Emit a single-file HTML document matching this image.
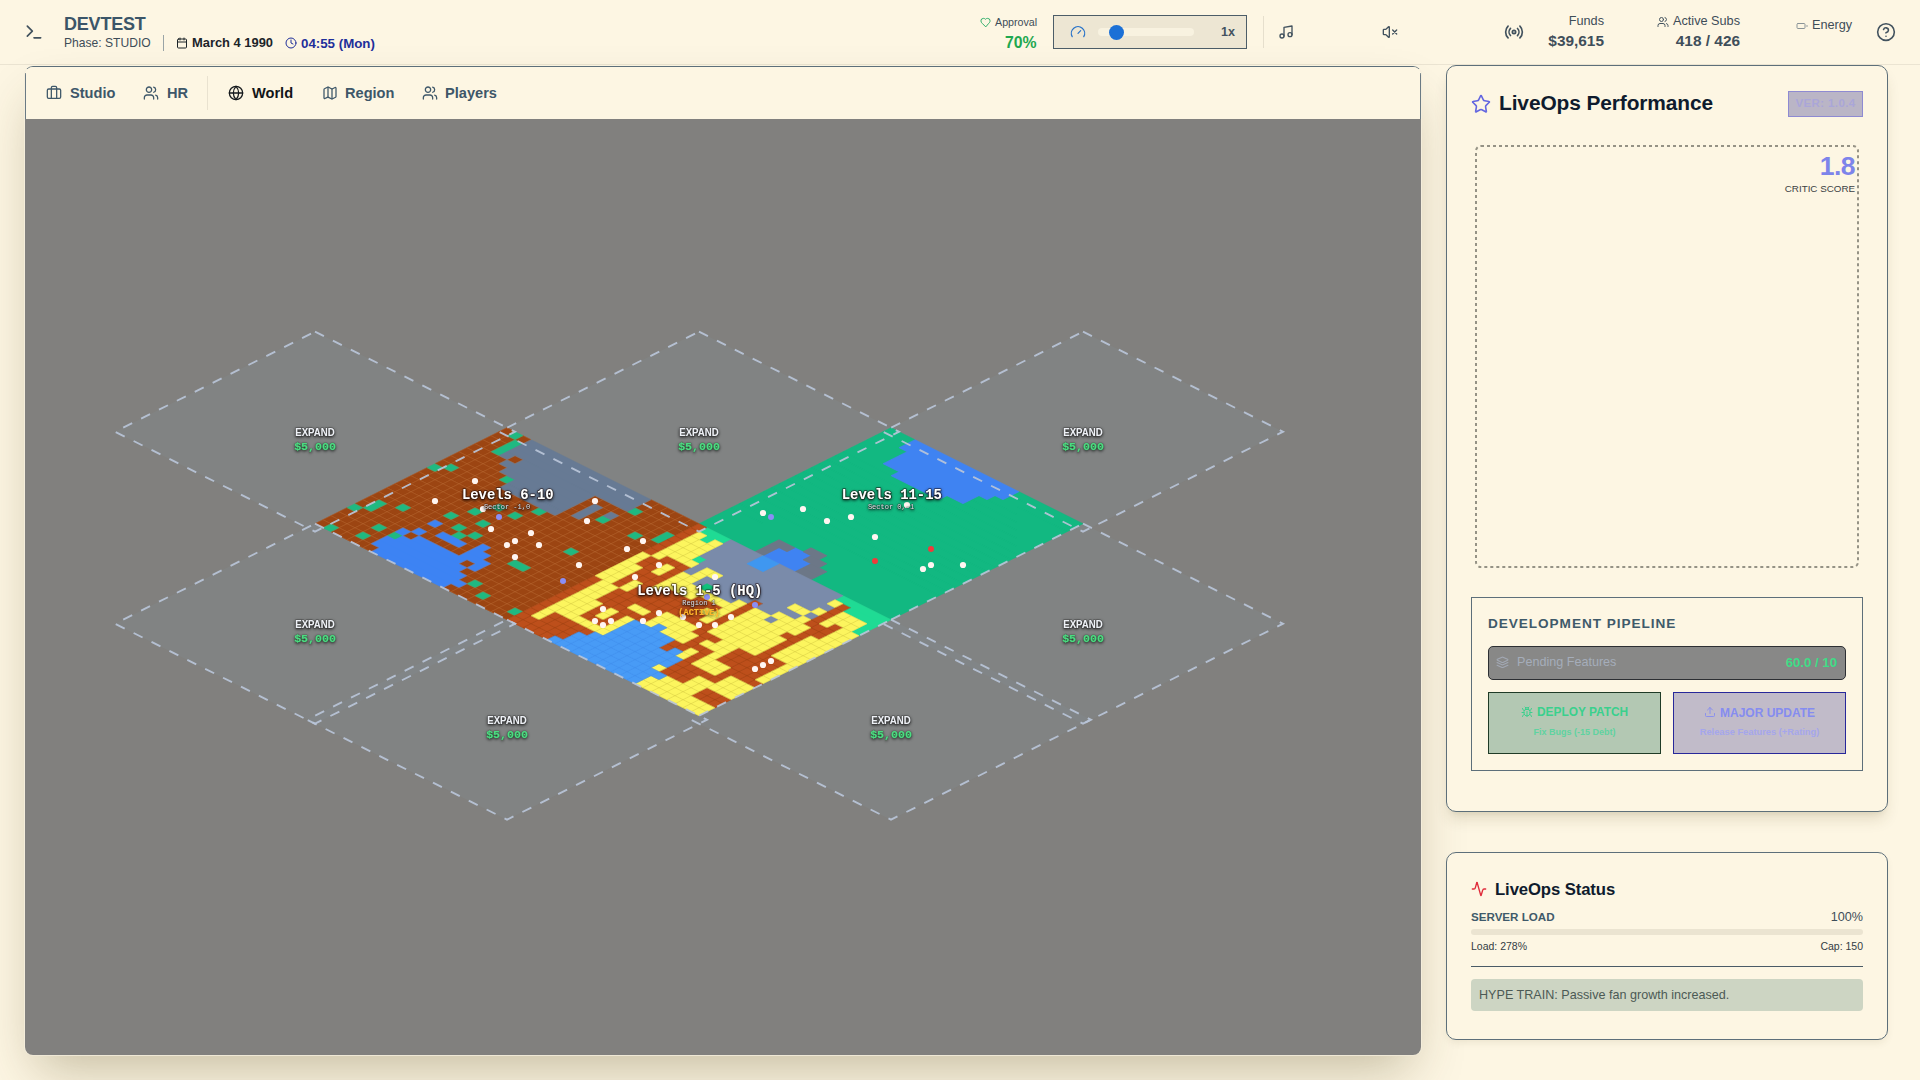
<!DOCTYPE html>
<html lang="en">
<head>
<meta charset="utf-8">
<title>DEVTEST - LiveOps</title>
<style>
*{box-sizing:border-box;margin:0;padding:0}
html,body{width:1920px;height:1080px;overflow:hidden}
body{background:#fdf6e3;font-family:"Liberation Sans",sans-serif;color:#3e505c;position:relative}
.abs{position:absolute;white-space:nowrap;line-height:1}
svg{display:block}
.ico{position:absolute;fill:none;stroke:#42525e;stroke-width:2;stroke-linecap:round;stroke-linejoin:round}
/* header */
#hdr{position:absolute;left:0;top:0;width:1920px;height:65px;border-bottom:1px solid #ebe4d2}
.title{left:64px;top:15px;font-size:18px;font-weight:700;color:#3b5568;letter-spacing:-.2px}
.phase{left:64px;top:37px;font-size:12.1px;color:#3e4d58}
.vsep{position:absolute;width:1px;background:#9aa4a6}
.date{left:192px;top:37px;font-size:12.9px;font-weight:700;color:#1c2429}
.time{left:301px;top:37px;font-size:13.3px;font-weight:700;color:#1f2f9a}
.r{text-align:right}
/* panels */
.panel{position:absolute;background:#fdf6e3;border:1px solid #5d6f7a;border-radius:10px;box-shadow:0 10px 15px -3px rgba(70,55,10,.14),0 4px 6px -4px rgba(70,55,10,.12)}
#main{left:23.9px;top:65.9px;width:1398.5px;height:990px;border-radius:9px;overflow:hidden;border-color:#5d6f7a #f4eddb #efe8d6 #f4eddb;box-shadow:0 25px 50px -12px rgba(70,55,10,.30)}
#tabs{position:absolute;left:0;top:0;width:100%;height:52px;background:#fdf6e3}
#mapbg{position:absolute;left:0;top:52px;width:100%;height:936px;background:#81807e}
.map{position:absolute;left:2.6px;top:52px}
.tab{font-size:14.6px;font-weight:700;color:#3e5769;top:86px}
.map text{font-family:"Liberation Mono","DejaVu Sans Mono",monospace;font-weight:700;text-anchor:middle}
.map .lv{font-size:13.9px;fill:#fff;stroke:#1a0d05;stroke-opacity:.55;stroke-width:1.6px;paint-order:stroke;stroke-linejoin:round}
.map .sc{font-size:7px;fill:#d9dfe8;font-weight:400;stroke:#20120a;stroke-opacity:.45;stroke-width:.9px;paint-order:stroke}
.map .ac{font-size:8.6px;fill:#fbb52a}
.map .ex{font-family:"Liberation Sans",sans-serif;font-size:10.8px;fill:#eef1f6;stroke:#222;stroke-opacity:.5;stroke-width:1.2px;paint-order:stroke;stroke-linejoin:round}
.map .pr{font-size:11.6px;fill:#4ade80;stroke:#253;stroke-opacity:.35;stroke-width:1px;paint-order:stroke;stroke-linejoin:round}
</style>
</head>
<body>
<!-- ================= HEADER ================= -->
<div id="hdr">
  <svg class="ico" style="left:24px;top:22px" width="20" height="20" viewBox="0 0 24 24"><path d="M4 17l6-6-6-6"/><path d="M12 19h8"/></svg>
  <div class="abs title">DEVTEST</div>
  <div class="abs phase">Phase: STUDIO</div>
  <div class="vsep" style="left:163px;top:35px;height:16px"></div>
  <svg class="ico" style="left:176px;top:37px;stroke:#1c2429" width="12" height="12" viewBox="0 0 24 24"><rect x="3" y="4" width="18" height="18" rx="2"/><path d="M16 2v4M8 2v4M3 10h18"/></svg>
  <div class="abs date">March 4 1990</div>
  <svg class="ico" style="left:285px;top:37px;stroke:#1f2f9a" width="12" height="12" viewBox="0 0 24 24"><circle cx="12" cy="12" r="10"/><path d="M12 6v6l4 2"/></svg>
  <div class="abs time">04:55 (Mon)</div>

  <svg class="ico" style="left:980px;top:17px;stroke:#22a860" width="11" height="11" viewBox="0 0 24 24"><path d="M19 14c1.5-1.5 3-3.2 3-5.5A5.5 5.5 0 0 0 16.5 3c-1.8 0-3 .5-4.5 2-1.500-1.500-2.700-2-4.500-2A5.500 5.500 0 0 0 2 8.500c0 2.300 1.500 4 3 5.500l7 7z"/></svg>
  <div class="abs" style="left:995px;top:17px;font-size:10.700px;color:#3e4d58">Approval</div>
  <div class="abs r" style="right:883.500px;top:35px;font-size:15.800px;font-weight:700;color:#1fa850">70%</div>

  <div style="position:absolute;left:1053px;top:15px;width:194px;height:34px;background:#ede6d3;border:1px solid #4c5d68"></div>
  <svg class="ico" style="left:1070px;top:24px;stroke:#2571c9;stroke-width:1.8" width="16" height="16" viewBox="0 0 24 24"><path d="M12 14l4-4"/><path d="M3.340 19a10 10 0 1 1 17.320 0"/></svg>
  <div style="position:absolute;left:1098px;top:28px;width:96px;height:8px;border-radius:4px;background:#f8f2e0"></div>
  <div style="position:absolute;left:1108.500px;top:24.500px;width:15px;height:15px;border-radius:50%;background:#1b70d6"></div>
  <div class="abs" style="left:1221px;top:26px;font-size:12.6px;font-weight:700;color:#44525f">1x</div>
  <div class="vsep" style="left:1263px;top:16px;height:32px;background:#e6dfcd"></div>
  <svg class="ico" style="left:1278px;top:24px" width="16" height="16" viewBox="0 0 24 24"><path d="M9 18V5l12-2v13"/><circle cx="6" cy="18" r="3"/><circle cx="18" cy="16" r="3"/></svg>
  <svg class="ico" style="left:1382px;top:24px" width="16" height="16" viewBox="0 0 24 24"><path d="M11 4.700a.7.700 0 0 0-1.200-.5L6.400 7.600a1.400 1.400 0 0 1-1 .4H3a1 1 0 0 0-1 1v6a1 1 0 0 0 1 1h2.400a1.400 1.400 0 0 1 1 .4l3.400 3.400a.7.700 0 0 0 1.200-.5z"/><path d="M22 9l-6 6M16 9l6 6"/></svg>
  <svg class="ico" style="left:1504px;top:22px" width="20" height="20" viewBox="0 0 24 24"><path d="M4.900 19.100C1 15.200 1 8.800 4.900 4.900"/><path d="M7.800 16.200c-2.300-2.300-2.300-6.100 0-8.500"/><circle cx="12" cy="12" r="2"/><path d="M16.200 7.800c2.300 2.300 2.300 6.100 0 8.500"/><path d="M19.100 4.900C23 8.800 23 15.100 19.100 19"/></svg>

  <div class="abs r" style="right:316px;top:15px;font-size:12.700px;color:#3e4d58">Funds</div>
  <div class="abs r" style="right:316px;top:33px;font-size:15.4px;font-weight:700;color:#3f4e5a">$39,615</div>
  <svg class="ico" style="left:1657px;top:16px;stroke-width:2" width="12" height="12" viewBox="0 0 24 24"><path d="M16 21v-2a4 4 0 0 0-4-4H6a4 4 0 0 0-4 4v2"/><circle cx="9" cy="7" r="4"/><path d="M22 21v-2a4 4 0 0 0-3-3.870"/><path d="M16 3.130a4 4 0 0 1 0 7.750"/></svg>
  <div class="abs r" style="right:180px;top:15px;font-size:12.700px;color:#3e4d58">Active Subs</div>
  <div class="abs r" style="right:180px;top:33px;font-size:15.4px;font-weight:700;color:#3f4e5a">418 / 426</div>
  <svg class="ico" style="left:1796px;top:20px;stroke:#8a9498" width="12" height="12" viewBox="0 0 24 24"><rect x="2" y="7" width="16" height="10" rx="2"/><path d="M22 11v2"/></svg>
  <div class="abs" style="left:1812px;top:19px;font-size:12.700px;color:#3e4d58">Energy</div>
  <svg class="ico" style="left:1876px;top:22px;stroke-width:1.9" width="20" height="20" viewBox="0 0 24 24"><circle cx="12" cy="12" r="10"/><path d="M9.090 9a3 3 0 0 1 5.830 1c0 2-3 3-3 3"/><path d="M12 17h.010"/></svg>
</div>

<!-- ================= MAIN ================= -->
<div id="main" class="panel">
  <div id="tabs"></div><div style="position:absolute;left:0;top:6px;width:1px;height:46px;background:#6a7a84"></div><div style="position:absolute;right:0;top:6px;width:1px;height:46px;background:#6a7a84"></div>
  <div id="mapbg"></div>
<svg class="map" width="1392" height="935" viewBox="27 119 1392 935">
<defs><filter id="sh" x="-20%" y="-40%" width="140%" height="180%"><feDropShadow dx="0" dy="1" stdDeviation="1.6" flood-color="#000" flood-opacity=".85"/></filter></defs>
<g transform="translate(0 -0.3)">
<polygon points="315,332 515,432 315,532 115,432" fill="#8b9bb3" fill-opacity=".10"/>
<polygon points="699,332 899,432 699,532 499,432" fill="#8b9bb3" fill-opacity=".10"/>
<polygon points="1083,332 1283,432 1083,532 883,432" fill="#8b9bb3" fill-opacity=".10"/>
<polygon points="315,524 515,624 315,724 115,624" fill="#8b9bb3" fill-opacity=".10"/>
<polygon points="1083,524 1283,624 1083,724 883,624" fill="#8b9bb3" fill-opacity=".10"/>
<polygon points="507,620 707,720 507,820 307,720" fill="#8b9bb3" fill-opacity=".10"/>
<polygon points="891,620 1091,720 891,820 691,720" fill="#8b9bb3" fill-opacity=".10"/>
<g transform="matrix(8 4 -8 4 507 428)">
<path d="M0 0h1v1h-1zM2 0h1v1h-1zM18 0h6v1h-6zM0 1h2v1h-2zM18 1h6v1h-6zM0 2h2v1h-2zM19 2h5v1h-5zM0 3h2v1h-2zM4 3h1v1h-1zM14 3h9v1h-9zM0 4h4v1h-4zM14 4h1v1h-1zM16 4h1v1h-1zM18 4h5v1h-5zM0 5h5v1h-5zM14 5h1v1h-1zM16 5h1v1h-1zM18 5h3v1h-3zM22 5h2v1h-2zM0 6h6v1h-6zM14 6h1v1h-1zM16 6h8v1h-8zM0 7h7v1h-7zM14 7h10v1h-10zM0 8h1v1h-1zM2 8h10v1h-10zM13 8h11v1h-11zM1 9h23v1h-23zM0 10h9v1h-9zM10 10h1v1h-1zM12 10h12v1h-12zM0 11h19v1h-19zM20 11h4v1h-4zM0 12h8v1h-8zM9 12h15v1h-15zM0 13h10v1h-10zM11 13h13v1h-13zM0 14h7v1h-7zM8 14h16v1h-16zM0 15h9v1h-9zM10 15h1v1h-1zM12 15h12v1h-12zM0 16h3v1h-3zM4 16h3v1h-3zM8 16h2v1h-2zM11 16h2v1h-2zM14 16h3v1h-3zM19 16h5v1h-5zM0 17h1v1h-1zM2 17h7v1h-7zM12 17h1v1h-1zM15 17h9v1h-9zM0 18h1v1h-1zM2 18h5v1h-5zM8 18h5v1h-5zM16 18h8v1h-8zM1 19h5v1h-5zM7 19h1v1h-1zM14 19h1v1h-1zM16 19h8v1h-8zM0 20h4v1h-4zM5 20h1v1h-1zM15 20h9v1h-9zM0 21h6v1h-6zM16 21h1v1h-1zM18 21h6v1h-6zM0 22h4v1h-4zM5 22h1v1h-1zM17 22h2v1h-2zM20 22h3v1h-3zM0 23h1v1h-1zM2 23h5v1h-5zM16 23h8v1h-8z" fill="#9c4512" stroke="#9c4512" stroke-width=".06"/>
<path d="M1 0h1v1h-1zM2 1h1v1h-1zM2 2h1v1h-1zM18 2h1v1h-1zM2 3h1v1h-1zM23 3h1v1h-1zM23 4h1v1h-1zM17 5h1v1h-1zM21 5h1v1h-1zM6 6h1v1h-1zM1 8h1v1h-1zM12 8h1v1h-1zM0 9h1v1h-1zM9 10h1v1h-1zM11 10h1v1h-1zM19 11h1v1h-1zM8 12h1v1h-1zM10 13h1v1h-1zM7 14h1v1h-1zM9 15h1v1h-1zM11 15h1v1h-1zM3 16h1v1h-1zM10 16h1v1h-1zM17 16h2v1h-2zM1 17h1v1h-1zM1 18h1v1h-1zM0 19h1v1h-1zM4 20h1v1h-1zM6 20h1v1h-1zM17 21h1v1h-1zM4 22h1v1h-1zM19 22h1v1h-1zM23 22h1v1h-1zM1 23h1v1h-1z" fill="#1fb981" stroke="#1fb981" stroke-width=".06"/>
<path d="M3 0h15v1h-15zM3 1h15v1h-15zM3 2h15v1h-15zM3 3h1v1h-1zM5 3h9v1h-9zM4 4h10v1h-10zM15 4h1v1h-1zM17 4h1v1h-1zM5 5h9v1h-9zM15 5h1v1h-1zM7 6h7v1h-7zM15 6h1v1h-1zM7 7h7v1h-7z" fill="#677a94" stroke="#677a94" stroke-width=".06"/>
<path d="M7 16h1v1h-1zM13 16h1v1h-1zM9 17h3v1h-3zM13 17h2v1h-2zM7 18h1v1h-1zM13 18h3v1h-3zM6 19h1v1h-1zM8 19h6v1h-6zM15 19h1v1h-1zM7 20h8v1h-8zM6 21h10v1h-10zM6 22h11v1h-11zM7 23h9v1h-9z" fill="#3d83f3" stroke="#3d83f3" stroke-width=".06"/>
<path d="M0 0h1v1h-1zM2 0h1v1h-1zM18 0h1v1h-1zM19 0h1v1h-1zM20 0h1v1h-1zM21 0h1v1h-1zM22 0h1v1h-1zM23 0h1v1h-1zM0 1h1v1h-1zM1 1h1v1h-1zM18 1h1v1h-1zM19 1h1v1h-1zM20 1h1v1h-1zM21 1h1v1h-1zM22 1h1v1h-1zM23 1h1v1h-1zM0 2h1v1h-1zM1 2h1v1h-1zM19 2h1v1h-1zM20 2h1v1h-1zM21 2h1v1h-1zM22 2h1v1h-1zM23 2h1v1h-1zM0 3h1v1h-1zM1 3h1v1h-1zM4 3h1v1h-1zM14 3h1v1h-1zM15 3h1v1h-1zM16 3h1v1h-1zM17 3h1v1h-1zM18 3h1v1h-1zM19 3h1v1h-1zM20 3h1v1h-1zM21 3h1v1h-1zM22 3h1v1h-1zM0 4h1v1h-1zM1 4h1v1h-1zM2 4h1v1h-1zM3 4h1v1h-1zM14 4h1v1h-1zM16 4h1v1h-1zM18 4h1v1h-1zM19 4h1v1h-1zM20 4h1v1h-1zM21 4h1v1h-1zM22 4h1v1h-1zM0 5h1v1h-1zM1 5h1v1h-1zM2 5h1v1h-1zM3 5h1v1h-1zM4 5h1v1h-1zM14 5h1v1h-1zM16 5h1v1h-1zM18 5h1v1h-1zM19 5h1v1h-1zM20 5h1v1h-1zM22 5h1v1h-1zM23 5h1v1h-1zM0 6h1v1h-1zM1 6h1v1h-1zM2 6h1v1h-1zM3 6h1v1h-1zM4 6h1v1h-1zM5 6h1v1h-1zM14 6h1v1h-1zM16 6h1v1h-1zM17 6h1v1h-1zM18 6h1v1h-1zM19 6h1v1h-1zM20 6h1v1h-1zM21 6h1v1h-1zM22 6h1v1h-1zM23 6h1v1h-1zM0 7h1v1h-1zM1 7h1v1h-1zM2 7h1v1h-1zM3 7h1v1h-1zM4 7h1v1h-1zM5 7h1v1h-1zM6 7h1v1h-1zM14 7h1v1h-1zM15 7h1v1h-1zM16 7h1v1h-1zM17 7h1v1h-1zM18 7h1v1h-1zM19 7h1v1h-1zM20 7h1v1h-1zM21 7h1v1h-1zM22 7h1v1h-1zM23 7h1v1h-1zM0 8h1v1h-1zM2 8h1v1h-1zM3 8h1v1h-1zM4 8h1v1h-1zM5 8h1v1h-1zM6 8h1v1h-1zM7 8h1v1h-1zM8 8h1v1h-1zM9 8h1v1h-1zM10 8h1v1h-1zM11 8h1v1h-1zM13 8h1v1h-1zM14 8h1v1h-1zM15 8h1v1h-1zM16 8h1v1h-1zM17 8h1v1h-1zM18 8h1v1h-1zM19 8h1v1h-1zM20 8h1v1h-1zM21 8h1v1h-1zM22 8h1v1h-1zM23 8h1v1h-1zM1 9h1v1h-1zM2 9h1v1h-1zM3 9h1v1h-1zM4 9h1v1h-1zM5 9h1v1h-1zM6 9h1v1h-1zM7 9h1v1h-1zM8 9h1v1h-1zM9 9h1v1h-1zM10 9h1v1h-1zM11 9h1v1h-1zM12 9h1v1h-1zM13 9h1v1h-1zM14 9h1v1h-1zM15 9h1v1h-1zM16 9h1v1h-1zM17 9h1v1h-1zM18 9h1v1h-1zM19 9h1v1h-1zM20 9h1v1h-1zM21 9h1v1h-1zM22 9h1v1h-1zM23 9h1v1h-1zM0 10h1v1h-1zM1 10h1v1h-1zM2 10h1v1h-1zM3 10h1v1h-1zM4 10h1v1h-1zM5 10h1v1h-1zM6 10h1v1h-1zM7 10h1v1h-1zM8 10h1v1h-1zM10 10h1v1h-1zM12 10h1v1h-1zM13 10h1v1h-1zM14 10h1v1h-1zM15 10h1v1h-1zM16 10h1v1h-1zM17 10h1v1h-1zM18 10h1v1h-1zM19 10h1v1h-1zM20 10h1v1h-1zM21 10h1v1h-1zM22 10h1v1h-1zM23 10h1v1h-1zM0 11h1v1h-1zM1 11h1v1h-1zM2 11h1v1h-1zM3 11h1v1h-1zM4 11h1v1h-1zM5 11h1v1h-1zM6 11h1v1h-1zM7 11h1v1h-1zM8 11h1v1h-1zM9 11h1v1h-1zM10 11h1v1h-1zM11 11h1v1h-1zM12 11h1v1h-1zM13 11h1v1h-1zM14 11h1v1h-1zM15 11h1v1h-1zM16 11h1v1h-1zM17 11h1v1h-1zM18 11h1v1h-1zM20 11h1v1h-1zM21 11h1v1h-1zM22 11h1v1h-1zM23 11h1v1h-1zM0 12h1v1h-1zM1 12h1v1h-1zM2 12h1v1h-1zM3 12h1v1h-1zM4 12h1v1h-1zM5 12h1v1h-1zM6 12h1v1h-1zM7 12h1v1h-1zM9 12h1v1h-1zM10 12h1v1h-1zM11 12h1v1h-1zM12 12h1v1h-1zM13 12h1v1h-1zM14 12h1v1h-1zM15 12h1v1h-1zM16 12h1v1h-1zM17 12h1v1h-1zM18 12h1v1h-1zM19 12h1v1h-1zM20 12h1v1h-1zM21 12h1v1h-1zM22 12h1v1h-1zM23 12h1v1h-1zM0 13h1v1h-1zM1 13h1v1h-1zM2 13h1v1h-1zM3 13h1v1h-1zM4 13h1v1h-1zM5 13h1v1h-1zM6 13h1v1h-1zM7 13h1v1h-1zM8 13h1v1h-1zM9 13h1v1h-1zM11 13h1v1h-1zM12 13h1v1h-1zM13 13h1v1h-1zM14 13h1v1h-1zM15 13h1v1h-1zM16 13h1v1h-1zM17 13h1v1h-1zM18 13h1v1h-1zM19 13h1v1h-1zM20 13h1v1h-1zM21 13h1v1h-1zM22 13h1v1h-1zM23 13h1v1h-1zM0 14h1v1h-1zM1 14h1v1h-1zM2 14h1v1h-1zM3 14h1v1h-1zM4 14h1v1h-1zM5 14h1v1h-1zM6 14h1v1h-1zM8 14h1v1h-1zM9 14h1v1h-1zM10 14h1v1h-1zM11 14h1v1h-1zM12 14h1v1h-1zM13 14h1v1h-1zM14 14h1v1h-1zM15 14h1v1h-1zM16 14h1v1h-1zM17 14h1v1h-1zM18 14h1v1h-1zM19 14h1v1h-1zM20 14h1v1h-1zM21 14h1v1h-1zM22 14h1v1h-1zM23 14h1v1h-1zM0 15h1v1h-1zM1 15h1v1h-1zM2 15h1v1h-1zM3 15h1v1h-1zM4 15h1v1h-1zM5 15h1v1h-1zM6 15h1v1h-1zM7 15h1v1h-1zM8 15h1v1h-1zM10 15h1v1h-1zM12 15h1v1h-1zM13 15h1v1h-1zM14 15h1v1h-1zM15 15h1v1h-1zM16 15h1v1h-1zM17 15h1v1h-1zM18 15h1v1h-1zM19 15h1v1h-1zM20 15h1v1h-1zM21 15h1v1h-1zM22 15h1v1h-1zM23 15h1v1h-1zM0 16h1v1h-1zM1 16h1v1h-1zM2 16h1v1h-1zM4 16h1v1h-1zM5 16h1v1h-1zM6 16h1v1h-1zM8 16h1v1h-1zM9 16h1v1h-1zM11 16h1v1h-1zM12 16h1v1h-1zM14 16h1v1h-1zM15 16h1v1h-1zM16 16h1v1h-1zM19 16h1v1h-1zM20 16h1v1h-1zM21 16h1v1h-1zM22 16h1v1h-1zM23 16h1v1h-1zM0 17h1v1h-1zM2 17h1v1h-1zM3 17h1v1h-1zM4 17h1v1h-1zM5 17h1v1h-1zM6 17h1v1h-1zM7 17h1v1h-1zM8 17h1v1h-1zM12 17h1v1h-1zM15 17h1v1h-1zM16 17h1v1h-1zM17 17h1v1h-1zM18 17h1v1h-1zM19 17h1v1h-1zM20 17h1v1h-1zM21 17h1v1h-1zM22 17h1v1h-1zM23 17h1v1h-1zM0 18h1v1h-1zM2 18h1v1h-1zM3 18h1v1h-1zM4 18h1v1h-1zM5 18h1v1h-1zM6 18h1v1h-1zM8 18h1v1h-1zM9 18h1v1h-1zM10 18h1v1h-1zM11 18h1v1h-1zM12 18h1v1h-1zM16 18h1v1h-1zM17 18h1v1h-1zM18 18h1v1h-1zM19 18h1v1h-1zM20 18h1v1h-1zM21 18h1v1h-1zM22 18h1v1h-1zM23 18h1v1h-1zM1 19h1v1h-1zM2 19h1v1h-1zM3 19h1v1h-1zM4 19h1v1h-1zM5 19h1v1h-1zM7 19h1v1h-1zM14 19h1v1h-1zM16 19h1v1h-1zM17 19h1v1h-1zM18 19h1v1h-1zM19 19h1v1h-1zM20 19h1v1h-1zM21 19h1v1h-1zM22 19h1v1h-1zM23 19h1v1h-1zM0 20h1v1h-1zM1 20h1v1h-1zM2 20h1v1h-1zM3 20h1v1h-1zM5 20h1v1h-1zM15 20h1v1h-1zM16 20h1v1h-1zM17 20h1v1h-1zM18 20h1v1h-1zM19 20h1v1h-1zM20 20h1v1h-1zM21 20h1v1h-1zM22 20h1v1h-1zM23 20h1v1h-1zM0 21h1v1h-1zM1 21h1v1h-1zM2 21h1v1h-1zM3 21h1v1h-1zM4 21h1v1h-1zM5 21h1v1h-1zM16 21h1v1h-1zM18 21h1v1h-1zM19 21h1v1h-1zM20 21h1v1h-1zM21 21h1v1h-1zM22 21h1v1h-1zM23 21h1v1h-1zM0 22h1v1h-1zM1 22h1v1h-1zM2 22h1v1h-1zM3 22h1v1h-1zM5 22h1v1h-1zM17 22h1v1h-1zM18 22h1v1h-1zM20 22h1v1h-1zM21 22h1v1h-1zM22 22h1v1h-1zM0 23h1v1h-1zM2 23h1v1h-1zM3 23h1v1h-1zM4 23h1v1h-1zM5 23h1v1h-1zM6 23h1v1h-1zM16 23h1v1h-1zM17 23h1v1h-1zM18 23h1v1h-1zM19 23h1v1h-1zM20 23h1v1h-1zM21 23h1v1h-1zM22 23h1v1h-1zM23 23h1v1h-1z" fill="none" stroke="#b96a36" stroke-width=".075" stroke-opacity="0.38"/>
</g>
<g transform="matrix(8 4 -8 4 891 428)">
<path d="M0 0h3v1h-3zM16 0h8v1h-8zM0 1h3v1h-3zM16 1h8v1h-8zM0 2h4v1h-4zM15 2h9v1h-9zM0 3h4v1h-4zM14 3h10v1h-10zM0 4h4v1h-4zM14 4h10v1h-10zM0 5h6v1h-6zM12 5h12v1h-12zM0 6h24v1h-24zM0 7h24v1h-24zM0 8h24v1h-24zM0 9h24v1h-24zM0 10h24v1h-24zM0 11h24v1h-24zM0 12h24v1h-24zM0 13h24v1h-24zM0 14h24v1h-24zM0 15h24v1h-24zM0 16h24v1h-24zM0 17h24v1h-24zM0 18h24v1h-24zM0 19h24v1h-24zM0 20h10v1h-10zM12 20h12v1h-12zM0 21h7v1h-7zM13 21h11v1h-11zM0 22h7v1h-7zM14 22h10v1h-10zM0 23h7v1h-7zM14 23h10v1h-10z" fill="#12b881" stroke="#12b881" stroke-width=".06"/>
<path d="M3 0h13v1h-13zM3 1h13v1h-13zM4 2h11v1h-11zM4 3h10v1h-10zM4 4h10v1h-10zM6 5h6v1h-6zM9 21h2v1h-2zM8 22h4v1h-4zM8 23h4v1h-4z" fill="#3f83f2" stroke="#3f83f2" stroke-width=".06"/>
<path d="M10 20h2v1h-2zM7 21h2v1h-2zM11 21h2v1h-2zM7 22h1v1h-1zM12 22h2v1h-2zM7 23h1v1h-1zM12 23h2v1h-2z" fill="#6c7787" stroke="#6c7787" stroke-width=".06"/>
</g>
<g transform="matrix(8 4 -8 4 699 524)">
<path d="M0 0h1v1h-1zM0 1h1v1h-1zM19 1h1v1h-1zM0 2h1v1h-1zM19 2h1v1h-1zM0 3h1v1h-1zM19 3h1v1h-1zM0 4h1v1h-1zM19 4h1v1h-1zM21 4h1v1h-1zM0 5h1v1h-1zM19 5h3v1h-3zM0 6h1v1h-1zM2 6h3v1h-3zM13 6h1v1h-1zM20 6h2v1h-2zM1 7h2v1h-2zM4 7h1v1h-1zM13 7h1v1h-1zM20 7h1v1h-1zM1 8h2v1h-2zM4 8h1v1h-1zM13 8h1v1h-1zM19 8h2v1h-2zM2 9h3v1h-3zM9 9h3v1h-3zM13 9h1v1h-1zM20 9h1v1h-1zM2 10h3v1h-3zM6 10h5v1h-5zM13 10h1v1h-1zM20 10h1v1h-1zM2 11h1v1h-1zM4 11h8v1h-8zM13 11h1v1h-1zM20 11h1v1h-1zM2 12h1v1h-1zM4 12h10v1h-10zM20 12h3v1h-3zM0 13h1v1h-1zM3 13h6v1h-6zM13 13h3v1h-3zM18 13h5v1h-5zM0 14h1v1h-1zM3 14h3v1h-3zM8 14h1v1h-1zM14 14h1v1h-1zM18 14h5v1h-5zM0 15h1v1h-1zM3 15h6v1h-6zM14 15h3v1h-3zM18 15h5v1h-5zM0 16h1v1h-1zM4 16h1v1h-1zM6 16h1v1h-1zM13 16h2v1h-2zM16 16h1v1h-1zM20 16h4v1h-4zM0 17h1v1h-1zM4 17h1v1h-1zM6 17h1v1h-1zM13 17h1v1h-1zM16 17h1v1h-1zM20 17h1v1h-1zM0 18h1v1h-1zM4 18h3v1h-3zM16 18h5v1h-5zM0 19h1v1h-1zM16 19h3v1h-3zM0 20h1v1h-1zM2 20h5v1h-5zM16 20h3v1h-3zM21 20h3v1h-3zM0 21h1v1h-1zM2 21h4v1h-4zM21 21h3v1h-3zM0 22h6v1h-6zM0 23h5v1h-5z" fill="#bd4f1b" stroke="#bd4f1b" stroke-width=".06"/>
<path d="M1 0h3v1h-3zM18 0h6v1h-6zM2 1h1v1h-1zM20 1h4v1h-4zM23 2h1v1h-1zM23 3h1v1h-1zM4 4h1v1h-1z" fill="#1fdb94" stroke="#1fdb94" stroke-width=".06"/>
<path d="M4 0h4v1h-4zM10 0h8v1h-8zM4 1h4v1h-4zM10 1h8v1h-8zM4 2h15v1h-15zM4 3h14v1h-14zM5 4h11v1h-11zM18 4h1v1h-1zM5 5h1v1h-1zM8 5h10v1h-10zM5 6h1v1h-1zM7 6h6v1h-6zM14 6h2v1h-2zM7 7h1v1h-1zM9 7h3v1h-3zM16 7h1v1h-1z" fill="#7a8baa" stroke="#7a8baa" stroke-width=".06"/>
<path d="M8 0h2v1h-2zM8 1h2v1h-2z" fill="#3f97f0" stroke="#3f97f0" stroke-width=".06"/>
<path d="M1 1h1v1h-1zM3 1h1v1h-1zM18 1h1v1h-1zM1 2h3v1h-3zM20 2h3v1h-3zM1 3h3v1h-3zM18 3h1v1h-1zM20 3h3v1h-3zM1 4h3v1h-3zM16 4h2v1h-2zM20 4h1v1h-1zM22 4h2v1h-2zM1 5h4v1h-4zM6 5h2v1h-2zM18 5h1v1h-1zM22 5h2v1h-2zM1 6h1v1h-1zM6 6h1v1h-1zM16 6h4v1h-4zM22 6h2v1h-2zM0 7h1v1h-1zM3 7h1v1h-1zM5 7h2v1h-2zM12 7h1v1h-1zM14 7h2v1h-2zM17 7h3v1h-3zM21 7h3v1h-3zM0 8h1v1h-1zM3 8h1v1h-1zM5 8h8v1h-8zM14 8h5v1h-5zM21 8h3v1h-3zM0 9h2v1h-2zM5 9h4v1h-4zM12 9h1v1h-1zM14 9h6v1h-6zM21 9h3v1h-3zM0 10h2v1h-2zM5 10h1v1h-1zM11 10h2v1h-2zM14 10h6v1h-6zM21 10h3v1h-3zM0 11h2v1h-2zM3 11h1v1h-1zM12 11h1v1h-1zM14 11h6v1h-6zM21 11h3v1h-3zM0 12h2v1h-2zM3 12h1v1h-1zM14 12h6v1h-6zM23 12h1v1h-1zM1 13h2v1h-2zM9 13h4v1h-4zM16 13h2v1h-2zM23 13h1v1h-1zM1 14h2v1h-2zM6 14h2v1h-2zM9 14h5v1h-5zM15 14h3v1h-3zM23 14h1v1h-1zM1 15h2v1h-2zM9 15h1v1h-1zM11 15h3v1h-3zM17 15h1v1h-1zM23 15h1v1h-1zM1 16h3v1h-3zM5 16h1v1h-1zM7 16h1v1h-1zM15 16h1v1h-1zM17 16h3v1h-3zM1 17h3v1h-3zM5 17h1v1h-1zM7 17h1v1h-1zM15 17h1v1h-1zM17 17h3v1h-3zM21 17h3v1h-3zM1 18h3v1h-3zM7 18h1v1h-1zM21 18h3v1h-3zM1 19h7v1h-7zM19 19h5v1h-5zM1 20h1v1h-1zM15 20h1v1h-1zM19 20h2v1h-2zM1 21h1v1h-1zM17 21h4v1h-4zM16 22h8v1h-8zM16 23h8v1h-8z" fill="#fcf55e" stroke="#fcf55e" stroke-width=".06"/>
<path d="M8 7h1v1h-1z" fill="#10c27c" stroke="#10c27c" stroke-width=".06"/>
<path d="M10 15h1v1h-1zM8 16h5v1h-5zM8 17h5v1h-5zM14 17h1v1h-1zM8 18h8v1h-8zM8 19h8v1h-8zM7 20h8v1h-8zM6 21h11v1h-11zM6 22h10v1h-10zM5 23h11v1h-11z" fill="#489bf6" stroke="#489bf6" stroke-width=".06"/>
<path d="M0 0h1v1h-1zM0 1h1v1h-1zM19 1h1v1h-1zM0 2h1v1h-1zM19 2h1v1h-1zM0 3h1v1h-1zM19 3h1v1h-1zM0 4h1v1h-1zM19 4h1v1h-1zM21 4h1v1h-1zM0 5h1v1h-1zM19 5h1v1h-1zM20 5h1v1h-1zM21 5h1v1h-1zM0 6h1v1h-1zM2 6h1v1h-1zM3 6h1v1h-1zM4 6h1v1h-1zM13 6h1v1h-1zM20 6h1v1h-1zM21 6h1v1h-1zM1 7h1v1h-1zM2 7h1v1h-1zM4 7h1v1h-1zM13 7h1v1h-1zM20 7h1v1h-1zM1 8h1v1h-1zM2 8h1v1h-1zM4 8h1v1h-1zM13 8h1v1h-1zM19 8h1v1h-1zM20 8h1v1h-1zM2 9h1v1h-1zM3 9h1v1h-1zM4 9h1v1h-1zM9 9h1v1h-1zM10 9h1v1h-1zM11 9h1v1h-1zM13 9h1v1h-1zM20 9h1v1h-1zM2 10h1v1h-1zM3 10h1v1h-1zM4 10h1v1h-1zM6 10h1v1h-1zM7 10h1v1h-1zM8 10h1v1h-1zM9 10h1v1h-1zM10 10h1v1h-1zM13 10h1v1h-1zM20 10h1v1h-1zM2 11h1v1h-1zM4 11h1v1h-1zM5 11h1v1h-1zM6 11h1v1h-1zM7 11h1v1h-1zM8 11h1v1h-1zM9 11h1v1h-1zM10 11h1v1h-1zM11 11h1v1h-1zM13 11h1v1h-1zM20 11h1v1h-1zM2 12h1v1h-1zM4 12h1v1h-1zM5 12h1v1h-1zM6 12h1v1h-1zM7 12h1v1h-1zM8 12h1v1h-1zM9 12h1v1h-1zM10 12h1v1h-1zM11 12h1v1h-1zM12 12h1v1h-1zM13 12h1v1h-1zM20 12h1v1h-1zM21 12h1v1h-1zM22 12h1v1h-1zM0 13h1v1h-1zM3 13h1v1h-1zM4 13h1v1h-1zM5 13h1v1h-1zM6 13h1v1h-1zM7 13h1v1h-1zM8 13h1v1h-1zM13 13h1v1h-1zM14 13h1v1h-1zM15 13h1v1h-1zM18 13h1v1h-1zM19 13h1v1h-1zM20 13h1v1h-1zM21 13h1v1h-1zM22 13h1v1h-1zM0 14h1v1h-1zM3 14h1v1h-1zM4 14h1v1h-1zM5 14h1v1h-1zM8 14h1v1h-1zM14 14h1v1h-1zM18 14h1v1h-1zM19 14h1v1h-1zM20 14h1v1h-1zM21 14h1v1h-1zM22 14h1v1h-1zM0 15h1v1h-1zM3 15h1v1h-1zM4 15h1v1h-1zM5 15h1v1h-1zM6 15h1v1h-1zM7 15h1v1h-1zM8 15h1v1h-1zM14 15h1v1h-1zM15 15h1v1h-1zM16 15h1v1h-1zM18 15h1v1h-1zM19 15h1v1h-1zM20 15h1v1h-1zM21 15h1v1h-1zM22 15h1v1h-1zM0 16h1v1h-1zM4 16h1v1h-1zM6 16h1v1h-1zM13 16h1v1h-1zM14 16h1v1h-1zM16 16h1v1h-1zM20 16h1v1h-1zM21 16h1v1h-1zM22 16h1v1h-1zM23 16h1v1h-1zM0 17h1v1h-1zM4 17h1v1h-1zM6 17h1v1h-1zM13 17h1v1h-1zM16 17h1v1h-1zM20 17h1v1h-1zM0 18h1v1h-1zM4 18h1v1h-1zM5 18h1v1h-1zM6 18h1v1h-1zM16 18h1v1h-1zM17 18h1v1h-1zM18 18h1v1h-1zM19 18h1v1h-1zM20 18h1v1h-1zM0 19h1v1h-1zM16 19h1v1h-1zM17 19h1v1h-1zM18 19h1v1h-1zM0 20h1v1h-1zM2 20h1v1h-1zM3 20h1v1h-1zM4 20h1v1h-1zM5 20h1v1h-1zM6 20h1v1h-1zM16 20h1v1h-1zM17 20h1v1h-1zM18 20h1v1h-1zM21 20h1v1h-1zM22 20h1v1h-1zM23 20h1v1h-1zM0 21h1v1h-1zM2 21h1v1h-1zM3 21h1v1h-1zM4 21h1v1h-1zM5 21h1v1h-1zM21 21h1v1h-1zM22 21h1v1h-1zM23 21h1v1h-1zM0 22h1v1h-1zM1 22h1v1h-1zM2 22h1v1h-1zM3 22h1v1h-1zM4 22h1v1h-1zM5 22h1v1h-1zM0 23h1v1h-1zM1 23h1v1h-1zM2 23h1v1h-1zM3 23h1v1h-1zM4 23h1v1h-1z" fill="none" stroke="#8f3a10" stroke-width=".075" stroke-opacity="0.27"/>
<path d="M1 1h1v1h-1zM3 1h1v1h-1zM18 1h1v1h-1zM1 2h1v1h-1zM2 2h1v1h-1zM3 2h1v1h-1zM20 2h1v1h-1zM21 2h1v1h-1zM22 2h1v1h-1zM1 3h1v1h-1zM2 3h1v1h-1zM3 3h1v1h-1zM18 3h1v1h-1zM20 3h1v1h-1zM21 3h1v1h-1zM22 3h1v1h-1zM1 4h1v1h-1zM2 4h1v1h-1zM3 4h1v1h-1zM16 4h1v1h-1zM17 4h1v1h-1zM20 4h1v1h-1zM22 4h1v1h-1zM23 4h1v1h-1zM1 5h1v1h-1zM2 5h1v1h-1zM3 5h1v1h-1zM4 5h1v1h-1zM6 5h1v1h-1zM7 5h1v1h-1zM18 5h1v1h-1zM22 5h1v1h-1zM23 5h1v1h-1zM1 6h1v1h-1zM6 6h1v1h-1zM16 6h1v1h-1zM17 6h1v1h-1zM18 6h1v1h-1zM19 6h1v1h-1zM22 6h1v1h-1zM23 6h1v1h-1zM0 7h1v1h-1zM3 7h1v1h-1zM5 7h1v1h-1zM6 7h1v1h-1zM12 7h1v1h-1zM14 7h1v1h-1zM15 7h1v1h-1zM17 7h1v1h-1zM18 7h1v1h-1zM19 7h1v1h-1zM21 7h1v1h-1zM22 7h1v1h-1zM23 7h1v1h-1zM0 8h1v1h-1zM3 8h1v1h-1zM5 8h1v1h-1zM6 8h1v1h-1zM7 8h1v1h-1zM8 8h1v1h-1zM9 8h1v1h-1zM10 8h1v1h-1zM11 8h1v1h-1zM12 8h1v1h-1zM14 8h1v1h-1zM15 8h1v1h-1zM16 8h1v1h-1zM17 8h1v1h-1zM18 8h1v1h-1zM21 8h1v1h-1zM22 8h1v1h-1zM23 8h1v1h-1zM0 9h1v1h-1zM1 9h1v1h-1zM5 9h1v1h-1zM6 9h1v1h-1zM7 9h1v1h-1zM8 9h1v1h-1zM12 9h1v1h-1zM14 9h1v1h-1zM15 9h1v1h-1zM16 9h1v1h-1zM17 9h1v1h-1zM18 9h1v1h-1zM19 9h1v1h-1zM21 9h1v1h-1zM22 9h1v1h-1zM23 9h1v1h-1zM0 10h1v1h-1zM1 10h1v1h-1zM5 10h1v1h-1zM11 10h1v1h-1zM12 10h1v1h-1zM14 10h1v1h-1zM15 10h1v1h-1zM16 10h1v1h-1zM17 10h1v1h-1zM18 10h1v1h-1zM19 10h1v1h-1zM21 10h1v1h-1zM22 10h1v1h-1zM23 10h1v1h-1zM0 11h1v1h-1zM1 11h1v1h-1zM3 11h1v1h-1zM12 11h1v1h-1zM14 11h1v1h-1zM15 11h1v1h-1zM16 11h1v1h-1zM17 11h1v1h-1zM18 11h1v1h-1zM19 11h1v1h-1zM21 11h1v1h-1zM22 11h1v1h-1zM23 11h1v1h-1zM0 12h1v1h-1zM1 12h1v1h-1zM3 12h1v1h-1zM14 12h1v1h-1zM15 12h1v1h-1zM16 12h1v1h-1zM17 12h1v1h-1zM18 12h1v1h-1zM19 12h1v1h-1zM23 12h1v1h-1zM1 13h1v1h-1zM2 13h1v1h-1zM9 13h1v1h-1zM10 13h1v1h-1zM11 13h1v1h-1zM12 13h1v1h-1zM16 13h1v1h-1zM17 13h1v1h-1zM23 13h1v1h-1zM1 14h1v1h-1zM2 14h1v1h-1zM6 14h1v1h-1zM7 14h1v1h-1zM9 14h1v1h-1zM10 14h1v1h-1zM11 14h1v1h-1zM12 14h1v1h-1zM13 14h1v1h-1zM15 14h1v1h-1zM16 14h1v1h-1zM17 14h1v1h-1zM23 14h1v1h-1zM1 15h1v1h-1zM2 15h1v1h-1zM9 15h1v1h-1zM11 15h1v1h-1zM12 15h1v1h-1zM13 15h1v1h-1zM17 15h1v1h-1zM23 15h1v1h-1zM1 16h1v1h-1zM2 16h1v1h-1zM3 16h1v1h-1zM5 16h1v1h-1zM7 16h1v1h-1zM15 16h1v1h-1zM17 16h1v1h-1zM18 16h1v1h-1zM19 16h1v1h-1zM1 17h1v1h-1zM2 17h1v1h-1zM3 17h1v1h-1zM5 17h1v1h-1zM7 17h1v1h-1zM15 17h1v1h-1zM17 17h1v1h-1zM18 17h1v1h-1zM19 17h1v1h-1zM21 17h1v1h-1zM22 17h1v1h-1zM23 17h1v1h-1zM1 18h1v1h-1zM2 18h1v1h-1zM3 18h1v1h-1zM7 18h1v1h-1zM21 18h1v1h-1zM22 18h1v1h-1zM23 18h1v1h-1zM1 19h1v1h-1zM2 19h1v1h-1zM3 19h1v1h-1zM4 19h1v1h-1zM5 19h1v1h-1zM6 19h1v1h-1zM7 19h1v1h-1zM19 19h1v1h-1zM20 19h1v1h-1zM21 19h1v1h-1zM22 19h1v1h-1zM23 19h1v1h-1zM1 20h1v1h-1zM15 20h1v1h-1zM19 20h1v1h-1zM20 20h1v1h-1zM1 21h1v1h-1zM17 21h1v1h-1zM18 21h1v1h-1zM19 21h1v1h-1zM20 21h1v1h-1zM16 22h1v1h-1zM17 22h1v1h-1zM18 22h1v1h-1zM19 22h1v1h-1zM20 22h1v1h-1zM21 22h1v1h-1zM22 22h1v1h-1zM23 22h1v1h-1zM16 23h1v1h-1zM17 23h1v1h-1zM18 23h1v1h-1zM19 23h1v1h-1zM20 23h1v1h-1zM21 23h1v1h-1zM22 23h1v1h-1zM23 23h1v1h-1z" fill="none" stroke="#c9bf3c" stroke-width=".075" stroke-opacity="0.27"/>
<path d="M10 15h1v1h-1zM8 16h1v1h-1zM9 16h1v1h-1zM10 16h1v1h-1zM11 16h1v1h-1zM12 16h1v1h-1zM8 17h1v1h-1zM9 17h1v1h-1zM10 17h1v1h-1zM11 17h1v1h-1zM12 17h1v1h-1zM14 17h1v1h-1zM8 18h1v1h-1zM9 18h1v1h-1zM10 18h1v1h-1zM11 18h1v1h-1zM12 18h1v1h-1zM13 18h1v1h-1zM14 18h1v1h-1zM15 18h1v1h-1zM8 19h1v1h-1zM9 19h1v1h-1zM10 19h1v1h-1zM11 19h1v1h-1zM12 19h1v1h-1zM13 19h1v1h-1zM14 19h1v1h-1zM15 19h1v1h-1zM7 20h1v1h-1zM8 20h1v1h-1zM9 20h1v1h-1zM10 20h1v1h-1zM11 20h1v1h-1zM12 20h1v1h-1zM13 20h1v1h-1zM14 20h1v1h-1zM6 21h1v1h-1zM7 21h1v1h-1zM8 21h1v1h-1zM9 21h1v1h-1zM10 21h1v1h-1zM11 21h1v1h-1zM12 21h1v1h-1zM13 21h1v1h-1zM14 21h1v1h-1zM15 21h1v1h-1zM16 21h1v1h-1zM6 22h1v1h-1zM7 22h1v1h-1zM8 22h1v1h-1zM9 22h1v1h-1zM10 22h1v1h-1zM11 22h1v1h-1zM12 22h1v1h-1zM13 22h1v1h-1zM14 22h1v1h-1zM15 22h1v1h-1zM5 23h1v1h-1zM6 23h1v1h-1zM7 23h1v1h-1zM8 23h1v1h-1zM9 23h1v1h-1zM10 23h1v1h-1zM11 23h1v1h-1zM12 23h1v1h-1zM13 23h1v1h-1zM14 23h1v1h-1zM15 23h1v1h-1z" fill="none" stroke="#3a86e6" stroke-width=".075" stroke-opacity="0.27"/>
</g>
<polygon points="315,332 515,432 315,532 115,432" fill="none" stroke="#b9c4d8" stroke-width="1.9" stroke-dasharray="10 10" stroke-opacity=".92"/>
<polygon points="699,332 899,432 699,532 499,432" fill="none" stroke="#b9c4d8" stroke-width="1.9" stroke-dasharray="10 10" stroke-opacity=".92"/>
<polygon points="1083,332 1283,432 1083,532 883,432" fill="none" stroke="#b9c4d8" stroke-width="1.9" stroke-dasharray="10 10" stroke-opacity=".92"/>
<polygon points="315,524 515,624 315,724 115,624" fill="none" stroke="#b9c4d8" stroke-width="1.9" stroke-dasharray="10 10" stroke-opacity=".92"/>
<polygon points="1083,524 1283,624 1083,724 883,624" fill="none" stroke="#b9c4d8" stroke-width="1.9" stroke-dasharray="10 10" stroke-opacity=".92"/>
<polygon points="507,620 707,720 507,820 307,720" fill="none" stroke="#b9c4d8" stroke-width="1.9" stroke-dasharray="10 10" stroke-opacity=".92"/>
<polygon points="891,620 1091,720 891,820 691,720" fill="none" stroke="#b9c4d8" stroke-width="1.9" stroke-dasharray="10 10" stroke-opacity=".92"/>
</g>
<circle cx="475" cy="481" r="3.1" fill="#fff5f1"/>
<circle cx="435" cy="501" r="3.1" fill="#fff5f1"/>
<circle cx="483" cy="509" r="3.1" fill="#fff5f1"/>
<circle cx="595" cy="501" r="3.1" fill="#fff5f1"/>
<circle cx="491" cy="529" r="3.1" fill="#fff5f1"/>
<circle cx="531" cy="533" r="3.1" fill="#fff5f1"/>
<circle cx="587" cy="521" r="3.1" fill="#fff5f1"/>
<circle cx="515" cy="541" r="3.1" fill="#fff5f1"/>
<circle cx="507" cy="545" r="3.1" fill="#fff5f1"/>
<circle cx="539" cy="545" r="3.1" fill="#fff5f1"/>
<circle cx="515" cy="557" r="3.1" fill="#fff5f1"/>
<circle cx="579" cy="565" r="3.1" fill="#fff5f1"/>
<circle cx="627" cy="549" r="3.1" fill="#fff5f1"/>
<circle cx="643" cy="541" r="3.1" fill="#fff5f1"/>
<circle cx="659" cy="565" r="3.1" fill="#fff5f1"/>
<circle cx="635" cy="577" r="3.1" fill="#fff5f1"/>
<circle cx="763" cy="513" r="3.1" fill="#fff5f1"/>
<circle cx="803" cy="509" r="3.1" fill="#fff5f1"/>
<circle cx="827" cy="521" r="3.1" fill="#fff5f1"/>
<circle cx="851" cy="517" r="3.1" fill="#fff5f1"/>
<circle cx="907" cy="505" r="3.1" fill="#fff5f1"/>
<circle cx="875" cy="537" r="3.1" fill="#fff5f1"/>
<circle cx="931" cy="565" r="3.1" fill="#fff5f1"/>
<circle cx="923" cy="569" r="3.1" fill="#fff5f1"/>
<circle cx="963" cy="565" r="3.1" fill="#fff5f1"/>
<circle cx="715" cy="577" r="3.1" fill="#fff5f1"/>
<circle cx="603" cy="609" r="3.1" fill="#fff5f1"/>
<circle cx="659" cy="613" r="3.1" fill="#fff5f1"/>
<circle cx="595" cy="621" r="3.1" fill="#fff5f1"/>
<circle cx="611" cy="621" r="3.1" fill="#fff5f1"/>
<circle cx="603" cy="625" r="3.1" fill="#fff5f1"/>
<circle cx="643" cy="621" r="3.1" fill="#fff5f1"/>
<circle cx="683" cy="617" r="3.1" fill="#fff5f1"/>
<circle cx="731" cy="617" r="3.1" fill="#fff5f1"/>
<circle cx="699" cy="625" r="3.1" fill="#fff5f1"/>
<circle cx="715" cy="625" r="3.1" fill="#fff5f1"/>
<circle cx="771" cy="661" r="3.1" fill="#fff5f1"/>
<circle cx="763" cy="665" r="3.1" fill="#fff5f1"/>
<circle cx="755" cy="669" r="3.1" fill="#fff5f1"/>
<circle cx="499" cy="517" r="3" fill="#8a8ef5"/>
<circle cx="563" cy="581" r="3" fill="#8a8ef5"/>
<circle cx="771" cy="517" r="3" fill="#8a8ef5"/>
<circle cx="707" cy="597" r="3" fill="#8a8ef5"/>
<circle cx="755" cy="605" r="3" fill="#8a8ef5"/>
<circle cx="931" cy="549" r="3" fill="#ef3b3b"/>
<circle cx="875" cy="561" r="3" fill="#ef3b3b"/>
<g filter="url(#sh)">
<text x="507.8" y="499.3" class="lv">Levels 6-10</text>
<text x="507" y="508.8" class="sc">Sector -1,0</text>
<text x="891.8" y="499.3" class="lv">Levels 11-15</text>
<text x="891" y="508.8" class="sc">Sector 0,-1</text>
<text x="699.8" y="595.3" class="lv">Levels 1-5 (HQ)</text>
<text x="699" y="604.8" class="sc">Region 1</text>
<text x="699" y="614.8" class="ac">(ACTIVE)</text>
<text x="315" y="435.5" class="ex" textLength="39.6" lengthAdjust="spacingAndGlyphs">EXPAND</text><text x="315" y="450.1" class="pr">$5,000</text>
<text x="699" y="435.5" class="ex" textLength="39.6" lengthAdjust="spacingAndGlyphs">EXPAND</text><text x="699" y="450.1" class="pr">$5,000</text>
<text x="1083" y="435.5" class="ex" textLength="39.6" lengthAdjust="spacingAndGlyphs">EXPAND</text><text x="1083" y="450.1" class="pr">$5,000</text>
<text x="315" y="627.5" class="ex" textLength="39.6" lengthAdjust="spacingAndGlyphs">EXPAND</text><text x="315" y="642.1" class="pr">$5,000</text>
<text x="1083" y="627.5" class="ex" textLength="39.6" lengthAdjust="spacingAndGlyphs">EXPAND</text><text x="1083" y="642.1" class="pr">$5,000</text>
<text x="507" y="723.5" class="ex" textLength="39.6" lengthAdjust="spacingAndGlyphs">EXPAND</text><text x="507" y="738.1" class="pr">$5,000</text>
<text x="891" y="723.5" class="ex" textLength="39.6" lengthAdjust="spacingAndGlyphs">EXPAND</text><text x="891" y="738.1" class="pr">$5,000</text>
</g>
</svg>
</div>
<svg class="ico" style="left:46px;top:85px;stroke:#3e5769;stroke-width:1.9" width="16" height="16" viewBox="0 0 24 24"><rect x="2" y="6" width="20" height="14" rx="2"/><path d="M16 20V4a2 2 0 0 0-2-2h-4a2 2 0 0 0-2 2v16"/></svg>
<div class="abs tab" style="left:70px">Studio</div>
<svg class="ico" style="left:143px;top:85px;stroke:#3e5769;stroke-width:1.9" width="16" height="16" viewBox="0 0 24 24"><path d="M16 21v-2a4 4 0 0 0-4-4H6a4 4 0 0 0-4 4v2"/><circle cx="9" cy="7" r="4"/><path d="M22 21v-2a4 4 0 0 0-3-3.870"/><path d="M16 3.130a4 4 0 0 1 0 7.750"/></svg>
<div class="abs tab" style="left:167px">HR</div>
<div class="vsep" style="left:207px;top:76px;height:34px;background:#e9e2d0"></div>
<svg class="ico" style="left:228px;top:85px;stroke:#15191c;stroke-width:1.9" width="16" height="16" viewBox="0 0 24 24"><circle cx="12" cy="12" r="10"/><path d="M12 2a14.500 14.500 0 0 0 0 20 14.500 14.500 0 0 0 0-20"/><path d="M2 12h20"/></svg>
<div class="abs tab" style="left:252px;color:#111518">World</div>
<svg class="ico" style="left:322px;top:85px;stroke:#3e5769;stroke-width:1.9" width="16" height="16" viewBox="0 0 24 24"><path d="M14.100 5.600a2 2 0 0 0 1.800 0l3.700-1.800A1 1 0 0 1 21 4.600v12.800a1 1 0 0 1-.6.900l-4.600 2.300a2 2 0 0 1-1.800 0l-4.200-2.100a2 2 0 0 0-1.800 0l-3.700 1.800A1 1 0 0 1 3 19.400V6.600a1 1 0 0 1 .6-.9l4.600-2.300a2 2 0 0 1 1.800 0z"/><path d="M15 5.800v15M9 3.200v15"/></svg>
<div class="abs tab" style="left:345px">Region</div>
<svg class="ico" style="left:422px;top:85px;stroke:#3e5769;stroke-width:1.9" width="16" height="16" viewBox="0 0 24 24"><path d="M16 21v-2a4 4 0 0 0-4-4H6a4 4 0 0 0-4 4v2"/><circle cx="9" cy="7" r="4"/><path d="M22 21v-2a4 4 0 0 0-3-3.870"/><path d="M16 3.130a4 4 0 0 1 0 7.750"/></svg>
<div class="abs tab" style="left:445px">Players</div>

<!-- ================= RIGHT PANEL 1 ================= -->
<div class="panel" style="left:1445.800px;top:64.500px;width:442px;height:747px"></div>
<svg class="ico" style="left:1471px;top:94px;stroke:#6366e0;stroke-width:1.9" width="20" height="20" viewBox="0 0 24 24"><path d="M11.500 2.300a.5.500 0 0 1 1 0l2.300 4.700a2.100 2.100 0 0 0 1.600 1.200l5.200.8a.5.500 0 0 1 .3.900l-3.800 3.700a2.100 2.100 0 0 0-.6 1.900l.9 5.200a.5.500 0 0 1-.8.600l-4.600-2.400a2.100 2.100 0 0 0-2 0l-4.600 2.400a.5.500 0 0 1-.8-.6l.9-5.200a2.100 2.100 0 0 0-.6-1.900L2.100 9.900a.5.500 0 0 1 .3-.9l5.200-.8a2.100 2.100 0 0 0 1.600-1.200z"/></svg>
<div class="abs" style="left:1499px;top:93px;font-size:20.900px;font-weight:700;color:#0f1b2d;letter-spacing:-.1px">LiveOps Performance</div>
<div style="position:absolute;left:1788px;top:91px;width:75px;height:26px;background:#bab5c6;border:1px solid #8e8ad2"></div>
<div class="abs" style="left:1788px;width:75px;top:98px;text-align:center;font-size:11.500px;font-weight:700;color:#aaa6d8;letter-spacing:.4px">VER: 1.0.4</div>
<svg style="position:absolute;left:1469.500px;top:140px" width="394" height="433" viewBox="0 0 394 433"><rect x="6" y="6" width="382" height="421" rx="5" fill="none" stroke="#959285" stroke-width="2" stroke-dasharray="3 3"/></svg>
<div class="abs r" style="right:65px;top:153px;font-size:26.500px;font-weight:700;color:#7d84ea;letter-spacing:-.5px">1.8</div>
<div class="abs r" style="right:65px;top:184px;font-size:9.800px;color:#3c3f44">CRITIC SCORE</div>

<div style="position:absolute;left:1471px;top:597px;width:392px;height:174px;border:1px solid #5d6f7a"></div>
<div class="abs" style="left:1488px;top:617px;font-size:13.600px;font-weight:700;color:#3f5a6a;letter-spacing:.95px">DEVELOPMENT PIPELINE</div>
<div style="position:absolute;left:1488px;top:646px;width:358px;height:34px;background:#888887;border:1.500px solid #2d2f33;border-radius:5px"></div>
<svg class="ico" style="left:1496px;top:656px;stroke:#a2a8b4;stroke-width:2" width="13" height="13" viewBox="0 0 24 24"><path d="M12.800 2.200a2 2 0 0 0-1.600 0L2.600 6.100a1 1 0 0 0 0 1.800l8.600 3.900a2 2 0 0 0 1.600 0l8.600-3.900a1 1 0 0 0 0-1.800z"/><path d="M2 12l9.200 4.200a2 2 0 0 0 1.600 0L22 12"/><path d="M2 17l9.200 4.200a2 2 0 0 0 1.600 0L22 17"/></svg>
<div class="abs" style="left:1517px;top:656px;font-size:12.600px;color:#a5adba">Pending Features</div>
<div class="abs r" style="right:83px;top:656px;font-size:13.200px;font-weight:700;color:#3fdc86">60.0 / 10</div>

<div style="position:absolute;left:1488px;top:692px;width:173px;height:62px;background:#b3c8b3;border:1.500px solid #1f3b27"></div>
<svg class="ico" style="left:1521px;top:706px;stroke:#3ad08d;stroke-width:2" width="12" height="12" viewBox="0 0 24 24"><path d="M8 2l1.900 1.900M14.100 3.900L16 2M9 7.100v-1a3 3 0 1 1 6 0v1"/><path d="M12 20c-3.300 0-6-2.700-6-6v-3a4 4 0 0 1 4-4h4a4 4 0 0 1 4 4v3c0 3.300-2.700 6-6 6M12 20v-9"/><path d="M6.500 9C4.600 8.800 3 7.100 3 5M6 13H2M3 21c0-2.100 1.700-3.900 3.800-4M20.970 5c0 2.100-1.600 3.800-3.500 4M22 13h-4M17.200 17c2.100.1 3.800 1.900 3.800 4"/></svg>
<div class="abs" style="left:1537px;top:707px;font-size:11.900px;font-weight:700;color:#3ad08d">DEPLOY PATCH</div>
<div class="abs" style="left:1488px;width:173px;text-align:center;top:728px;font-size:9px;font-weight:700;color:#5fd3a0">Fix Bugs (-15 Debt)</div>

<div style="position:absolute;left:1673px;top:692px;width:173px;height:62px;background:#c1bbc9;border:1.500px solid #28289a"></div>
<svg class="ico" style="left:1704px;top:706px;stroke:#8a90ee;stroke-width:2" width="12" height="12" viewBox="0 0 24 24"><path d="M21 15v4a2 2 0 0 1-2 2H5a2 2 0 0 1-2-2v-4"/><path d="M17 8l-5-5-5 5M12 3v12"/></svg>
<div class="abs" style="left:1720px;top:707px;font-size:12px;font-weight:700;color:#858cf0">MAJOR UPDATE</div>
<div class="abs" style="left:1673px;width:173px;text-align:center;top:728px;font-size:9.300px;font-weight:700;color:#a5a6ec">Release Features (+Rating)</div>

<!-- ================= RIGHT PANEL 2 ================= -->
<div class="panel" style="left:1445.800px;top:851.500px;width:442px;height:188px;box-shadow:0 4px 8px -2px rgba(70,55,10,.10)"></div>
<svg class="ico" style="left:1471px;top:881px;stroke:#e02d3c;stroke-width:2" width="16" height="16" viewBox="0 0 24 24"><path d="M22 12h-2.500a2 2 0 0 0-1.900 1.500l-2.400 8.300a.25.250 0 0 1-.5 0L9.200 2.200a.25.250 0 0 0-.5 0L6.400 10.500A2 2 0 0 1 4.500 12H2"/></svg>
<div class="abs" style="left:1495px;top:882px;font-size:16.700px;font-weight:700;color:#0f1b2d;letter-spacing:-.1px">LiveOps Status</div>
<div class="abs" style="left:1471px;top:911px;font-size:11.600px;font-weight:700;color:#3f5a6a">SERVER LOAD</div>
<div class="abs r" style="right:57px;top:911px;font-size:12.600px;color:#3e4d58">100%</div>
<div style="position:absolute;left:1471px;top:929px;width:392px;height:6px;border-radius:3px;background:#ebe4d1"></div>
<div class="abs" style="left:1471px;top:941px;font-size:10.500px;color:#333c44">Load: 278%</div>
<div class="abs r" style="right:57px;top:941px;font-size:10.500px;color:#333c44">Cap: 150</div>
<div style="position:absolute;left:1471px;top:966px;width:392px;height:1px;background:#4a5b66"></div>
<div style="position:absolute;left:1471px;top:979px;width:392px;height:32px;border-radius:4px;background:#cdd5c3"></div>
<div class="abs" style="left:1479px;top:989px;font-size:12.600px;color:#4c5a55">HYPE TRAIN: Passive fan growth increased.</div>
</body>
</html>
